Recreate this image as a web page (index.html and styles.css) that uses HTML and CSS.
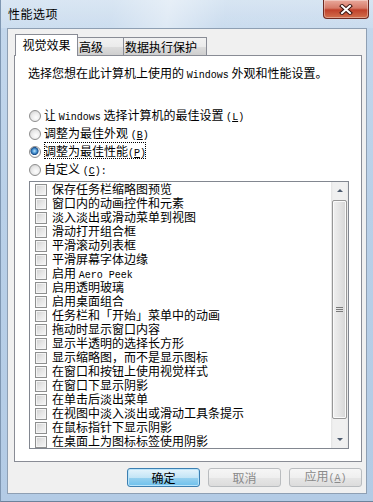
FILE: index.html
```html
<!DOCTYPE html>
<html lang="zh-CN">
<head>
  <meta charset="UTF-8" />
  <title>性能选项</title>
  <link rel="stylesheet" href="styles.css">
</head>
<body>
  <div class="window">
    <div class="titlebar">
      <span class="title">性能选项</span>
      <button class="close" aria-label="关闭">
        <svg width="14" height="11" viewBox="0 0 14 11">
          <path d="M3 2 L11 9 M11 2 L3 9" stroke="#3a1510" stroke-width="4" stroke-linecap="square" />
          <path d="M3 2 L11 9 M11 2 L3 9" stroke="#fff" stroke-width="2" stroke-linecap="square" />
        </svg>
      </button>
    </div>

    <div class="client">
      <div class="tabs">
        <div class="tab active">视觉效果</div>
        <div class="tab tab-adv">高级</div>
        <div class="tab tab-dep">数据执行保护</div>
      </div>

      <div class="panel">
        <p class="intro">选择您想在此计算机上使用的 <span class="mono">Windows</span> 外观和性能设置。</p>

        <div class="radios">
          <label class="radio-row"><span class="radio"></span>让 <span class="mono">Windows</span> 选择计算机的最佳设置 <span class="mono">(<u>L</u>)</span></label>
          <label class="radio-row"><span class="radio"></span>调整为最佳外观 <span class="mono">(<u>B</u>)</span></label>
          <label class="radio-row"><span class="radio checked"></span><span class="focus">调整为最佳性能<span class="mono">(<u>P</u>)</span></span></label>
          <label class="radio-row"><span class="radio"></span>自定义 <span class="mono">(<u>C</u>):</span></label>
        </div>

        <div class="listbox">
          <ul class="items">
            <li><span class="check"></span>保存任务栏缩略图预览</li>
            <li><span class="check"></span>窗口内的动画控件和元素</li>
            <li><span class="check"></span>淡入淡出或滑动菜单到视图</li>
            <li><span class="check"></span>滑动打开组合框</li>
            <li><span class="check"></span>平滑滚动列表框</li>
            <li><span class="check"></span>平滑屏幕字体边缘</li>
            <li><span class="check"></span>启用 <span class="mono">Aero Peek</span></li>
            <li><span class="check"></span>启用透明玻璃</li>
            <li><span class="check"></span>启用桌面组合</li>
            <li><span class="check"></span>任务栏和「开始」菜单中的动画</li>
            <li><span class="check"></span>拖动时显示窗口内容</li>
            <li><span class="check"></span>显示半透明的选择长方形</li>
            <li><span class="check"></span>显示缩略图，而不是显示图标</li>
            <li><span class="check"></span>在窗口和按钮上使用视觉样式</li>
            <li><span class="check"></span>在窗口下显示阴影</li>
            <li><span class="check"></span>在单击后淡出菜单</li>
            <li><span class="check"></span>在视图中淡入淡出或滑动工具条提示</li>
            <li><span class="check"></span>在鼠标指针下显示阴影</li>
            <li><span class="check"></span>在桌面上为图标标签使用阴影</li>
          </ul>
          <div class="scrollbar">
            <div class="arrow up"></div>
            <div class="thumb"><span class="grip"></span></div>
            <div class="track"></div>
            <div class="arrow down"></div>
          </div>
        </div>
      </div>

      <div class="buttons">
        <button class="btn default">确定</button>
        <button class="btn faded">取消</button>
        <button class="btn faded">应用<span class="mono">(<u>A</u>)</span></button>
      </div>
    </div>
  </div>
</body>
</html>
```

FILE: styles.css
```css
body {
  margin: 0;
  font-family: "Noto Sans CJK SC", sans-serif;
  font-size: 12px;
  color: #000;
}

.mono {
  font-family: "Liberation Mono", "Noto Sans CJK SC", monospace;
  font-size: 10px;
}

.window {
  width: 373px;
  height: 502px;
  box-sizing: border-box;
  display: flex;
  flex-direction: column;
  background: linear-gradient(to bottom, #d3e2f1 0%, #c3d7ec 6%, #b9d0e8 40%, #b3cbe5 100%);
  border-left: 1px solid #7f97b2;
  border-bottom: 1px solid #6c829b;
}

/* title bar */
.titlebar {
  height: 28px;
  flex: none;
  display: flex;
  align-items: flex-start;
  padding: 0 4px 0 7px;
  background: linear-gradient(100deg, rgba(255,255,255,0.15) 30%, rgba(255,255,255,0.45) 45%, rgba(255,255,255,0.1) 60%);
}

.title {
  line-height: 28px;
  font-size: 12px;
  letter-spacing: 0.5px;
}

.close {
  margin-left: auto;
  width: 46px;
  height: 19px;
  padding: 0;
  border: 1px solid #6e2a22;
  border-top: none;
  border-radius: 0 0 4px 4px;
  background: linear-gradient(to bottom, #e9a99c 0%, #d67a68 45%, #c0412b 55%, #d2704e 100%);
  display: flex;
  align-items: center;
  justify-content: center;
  box-shadow: inset 0 0 0 1px rgba(255,255,255,0.35);
}

/* client area */
.client {
  flex: 1;
  margin: 0 6px 7px 6px;
  background: #f0f0f0;
  border: 1px solid #8e9fb3;
  padding: 5px 4px 0 6px;
  display: flex;
  flex-direction: column;
}

.tabs {
  display: flex;
  align-items: flex-end;
  height: 21px;
  padding-left: 1px;
}

.tab {
  box-sizing: border-box;
  border: 1px solid #898c95;
  border-bottom: none;
  line-height: 14px;
  white-space: nowrap;
}

.tab.active {
  width: 63px;
  height: 22px;
  margin-bottom: -1px;
  padding-top: 3px;
  text-align: center;
  background: #fff;
  position: relative;
  z-index: 1;
}

.tab-adv,
.tab-dep {
  height: 18px;
  padding: 2px 0 0 1px;
  margin-left: -1px;
  background: linear-gradient(to bottom, #f2f2f2 0%, #ebebeb 50%, #dddddd 51%, #cfcfcf 100%);
}

.tab-adv {
  width: 47px;
}

.tab-dep {
  width: 84px;
}

.panel {
  height: 407px;
  box-sizing: border-box;
  flex: none;
  background: #fff;
  border: 1px solid #898c95;
  padding: 10px 0 0 13px;
}

.intro {
  margin: 0;
  line-height: 14px;
}

.radios {
  margin-top: 23px;
}

.radio-row {
  display: block;
  height: 18px;
  line-height: 18px;
  white-space: nowrap;
}

.radio {
  display: inline-block;
  vertical-align: -2px;
  width: 12px;
  height: 12px;
  box-sizing: border-box;
  margin: 0 3px 0 1px;
  border-radius: 50%;
  border: 1px solid #8d8d8d;
  background: radial-gradient(circle at 60% 65%, #fdfdfd 0%, #ececec 45%, #c9c9c9 100%);
}

.radio.checked {
  background: radial-gradient(circle at 45% 40%, #bfe2fb 0%, #4d9ad6 25%, #1b4f8c 45%, #ffffff 55%, #e4e4e4 80%, #c9c9c9 100%);
}

.focus {
  outline: 1px dotted #000;
  outline-offset: -1px;
}

.listbox {
  margin: 3px 0 0 1px;
  width: 320px;
  height: 268px;
  box-sizing: border-box;
  border: 1px solid #828790;
  display: flex;
}

.items {
  flex: 1;
  list-style: none;
  margin: 0;
  padding: 0 0 0 5px;
}

.items li {
  height: 14px;
  line-height: 14px;
  white-space: nowrap;
}

.check {
  display: inline-block;
  vertical-align: -2px;
  width: 12px;
  height: 12px;
  box-sizing: border-box;
  margin-right: 5px;
  border: 1px solid #8e8f8f;
  background: linear-gradient(135deg, #cfcfcf 0%, #e6e6e6 50%, #f7f7f7 100%);
  box-shadow: inset 0 0 0 1px #f4f4f4;
}

/* scrollbar */
.scrollbar {
  width: 17px;
  flex: none;
  display: flex;
  flex-direction: column;
  background: linear-gradient(to right, #e3e3e3 0px, #f0f0f0 2px, #f0f0f0 15px, #e8e8e8 17px);
}

.arrow {
  height: 17px;
  flex: none;
  display: flex;
  align-items: center;
  justify-content: center;
}

.arrow::before {
  content: "";
  border-left: 3px solid transparent;
  border-right: 3px solid transparent;
}

.arrow.up::before {
  border-bottom: 3px solid #4d5b6f;
}

.arrow.down::before {
  border-top: 3px solid #4d5b6f;
}

.thumb {
  height: 219px;
  margin: 1px 1px 0 1px;
  flex: none;
  box-sizing: border-box;
  border: 1px solid #979797;
  border-radius: 2px;
  background: linear-gradient(to right, #f0f0f0 0%, #e4e4e4 50%, #d6d6d6 100%);
  box-shadow: inset 0 0 0 1px #fafafa;
  display: flex;
  align-items: center;
  justify-content: center;
}

.grip {
  width: 7px;
  height: 5px;
  background: repeating-linear-gradient(to bottom, #7a7a7a 0 1px, transparent 1px 2px);
}

.track {
  flex: 1;
}

/* dialog buttons */
.buttons {
  display: flex;
  justify-content: flex-end;
  gap: 8px;
  margin-top: 6px;
}

.btn {
  width: 73px;
  height: 19px;
  padding: 0;
  font-family: "Noto Sans CJK SC", sans-serif;
  font-size: 12px;
  line-height: 14px;
  border-radius: 3px;
}

.btn.default {
  border: 1px solid #3c7fb1;
  background: linear-gradient(to bottom, #e5f4fc 0%, #c4e5f6 50%, #98d1ef 51%, #6dc0ec 100%);
  box-shadow: inset 0 0 0 1px #b9e4fb;
  color: #000;
}

.btn.faded {
  border: 1px solid #b9bcbf;
  background: linear-gradient(to bottom, #f6f6f6 0%, #efefef 50%, #e6e6e6 51%, #dcdcdc 100%);
  color: #8a8a8a;
}
```
